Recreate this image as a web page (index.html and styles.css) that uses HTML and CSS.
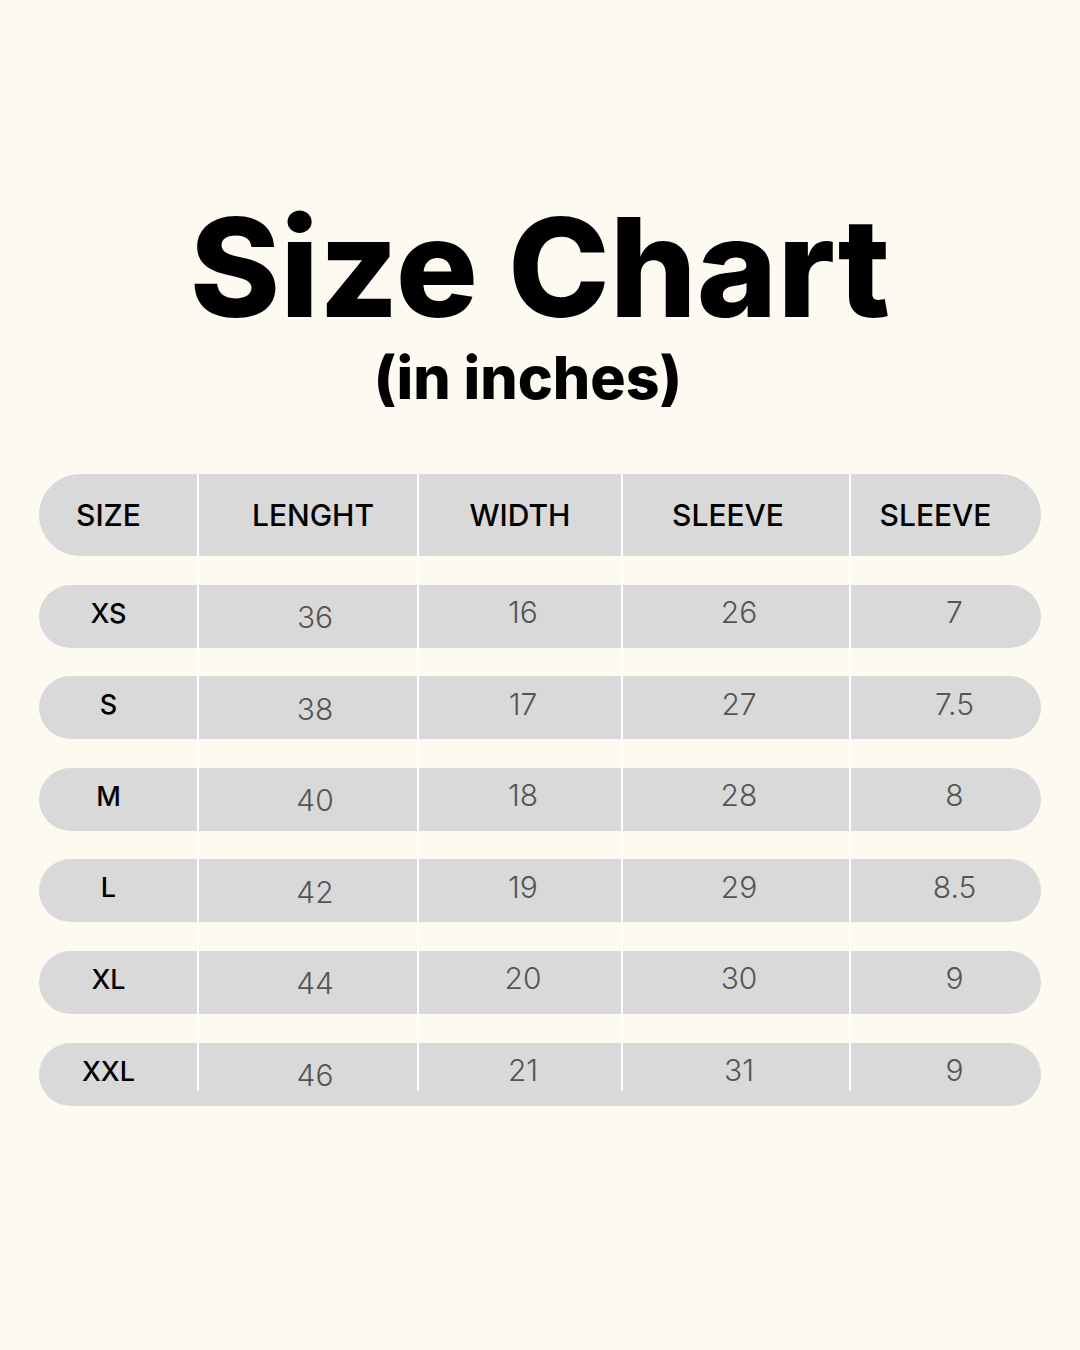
FILE: index.html
```html
<!DOCTYPE html>
<html>
<head>
<meta charset="utf-8">
<link rel="stylesheet" href="styles.css">
</head>
<body>
<main class="page">
  <h1 class="title">Size Chart</h1>
  <p class="subtitle">(in inches)</p>
  <div class="table">
    <div class="row head">
      <div class="cell c1">SIZE</div>
      <div class="cell c2">LENGHT</div>
      <div class="cell c3">WIDTH</div>
      <div class="cell c4">SLEEVE</div>
      <div class="cell c5">SLEEVE</div>
    </div>
    <div class="row">
      <div class="cell size">XS</div>
      <div class="cell num">36</div>
      <div class="cell num">16</div>
      <div class="cell num">26</div>
      <div class="cell num">7</div>
    </div>
    <div class="row">
      <div class="cell size">S</div>
      <div class="cell num">38</div>
      <div class="cell num">17</div>
      <div class="cell num">27</div>
      <div class="cell num">7.5</div>
    </div>
    <div class="row">
      <div class="cell size">M</div>
      <div class="cell num">40</div>
      <div class="cell num">18</div>
      <div class="cell num">28</div>
      <div class="cell num">8</div>
    </div>
    <div class="row">
      <div class="cell size">L</div>
      <div class="cell num">42</div>
      <div class="cell num">19</div>
      <div class="cell num">29</div>
      <div class="cell num">8.5</div>
    </div>
    <div class="row">
      <div class="cell size">XL</div>
      <div class="cell num">44</div>
      <div class="cell num">20</div>
      <div class="cell num">30</div>
      <div class="cell num">9</div>
    </div>
    <div class="row">
      <div class="cell size">XXL</div>
      <div class="cell num">46</div>
      <div class="cell num">21</div>
      <div class="cell num">31</div>
      <div class="cell num">9</div>
    </div>
    <div class="dividers">
      <span class="line l1"></span>
      <span class="line l2"></span>
      <span class="line l3"></span>
      <span class="line l4"></span>
    </div>
  </div>
</main>
</body>
</html>
```

FILE: styles.css
```css
html, body {
  margin: 0;
  padding: 0;
}
body {
  background: #fdfaf2;
  width: 1080px;
  height: 1350px;
  overflow: hidden;
  font-family: "Inter", "Liberation Sans", sans-serif;
}
.page {
  display: flex;
  flex-direction: column;
  align-items: center;
  padding-top: 202px;
}
.title {
  margin: 0;
  font-family: "Inter", sans-serif;
  font-weight: 800;
  font-size: 137px;
  line-height: 130px;
  color: #000;
}
.subtitle {
  margin: 14px 24px 0 0;
  font-family: "Inter", sans-serif;
  font-weight: 800;
  font-size: 59px;
  line-height: 64px;
  color: #000;
}
.table {
  position: relative;
  margin-top: 64px;
  width: 1002px;
  display: flex;
  flex-direction: column;
  gap: 28.6px;
}
.row {
  display: grid;
  grid-template-columns: 159px 220px 204px 228px 191px;
  height: 63px;
  background: #d9d9d9;
  border-radius: 32px;
}
.row.head {
  height: 82px;
  border-radius: 41px;
}
.cell {
  display: flex;
  align-items: center;
  justify-content: center;
}
.head .cell {
  font-family: "Inter", sans-serif;
  font-weight: 500;
  font-size: 30px;
  color: #000;
}
.head .c1 { padding-right: 20px; }
.head .c2 { padding-left: 10px; }
.head .c4 { padding-right: 16px; }
.head .c5 { padding-right: 20px; }
.size {
  font-weight: 500;
  font-size: 27px;
  color: #000;
  padding-right: 20px;
  padding-bottom: 6px;
}
.num {
  font-weight: 300;
  font-size: 30px;
  color: #555;
}
.num:nth-child(2) { padding-left: 14px; padding-top: 2px; }
.num:nth-child(3) { padding-left: 6px; padding-bottom: 8px; }
.num:nth-child(4) { padding-left: 6px; padding-bottom: 8px; }
.num:nth-child(5) { padding-left: 18px; padding-bottom: 8px; }
.dividers {
  position: absolute;
  left: 0;
  top: 0;
  width: 100%;
  height: 617px;
  pointer-events: none;
}
.line {
  position: absolute;
  top: 0;
  width: 2px;
  height: 100%;
  background: #ffffff;
}
.l1 { left: 158px; }
.l2 { left: 378px; }
.l3 { left: 582px; }
.l4 { left: 810px; }
```
